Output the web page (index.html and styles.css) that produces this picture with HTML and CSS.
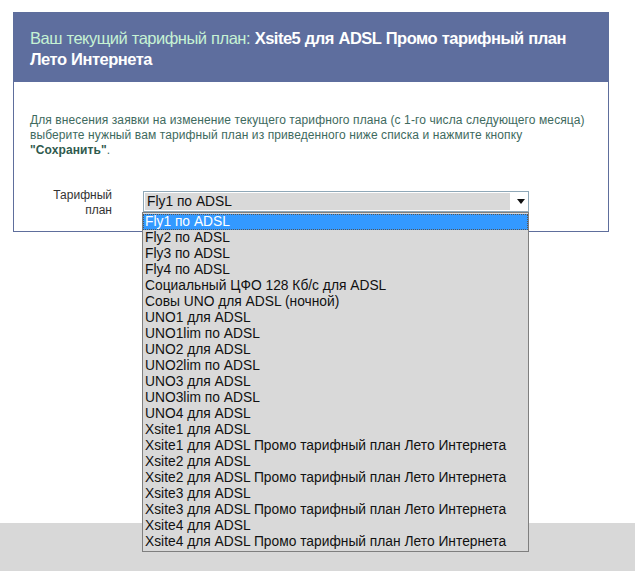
FILE: index.html
```html
<!DOCTYPE html>
<html lang="ru">
<head>
<meta charset="utf-8">
<title>Тарифный план</title>
<link rel="stylesheet" href="styles.css">
</head>
<body>
<div class="main">
  <div class="panel">
    <div class="head"><span class="cur">Ваш текущий тарифный план:</span> <b>Xsite5 для ADSL Промо тарифный план Лето Интернета</b></div>
    <div class="content">
      <p class="info">Для внесения заявки на изменение текущего тарифного плана (с 1-го числа следующего месяца) выберите нужный вам тарифный план из приведенного ниже списка и нажмите кнопку <b>"Сохранить"</b>.</p>
      <div class="row">
        <div class="label">Тарифный<br>план</div>
        <div class="selectwrap">
          <div class="select"><span class="value">Fly1 по ADSL</span><span class="arrow"></span></div>
          <ul class="list">
            <li class="sel">Fly1 по ADSL</li>
            <li>Fly2 по ADSL</li>
            <li>Fly3 по ADSL</li>
            <li>Fly4 по ADSL</li>
            <li>Социальный ЦФО 128 Кб/с для ADSL</li>
            <li>Совы UNO для ADSL (ночной)</li>
            <li>UNO1 для ADSL</li>
            <li>UNO1lim по ADSL</li>
            <li>UNO2 для ADSL</li>
            <li>UNO2lim по ADSL</li>
            <li>UNO3 для ADSL</li>
            <li>UNO3lim по ADSL</li>
            <li>UNO4 для ADSL</li>
            <li>Xsite1 для ADSL</li>
            <li>Xsite1 для ADSL Промо тарифный план Лето Интернета</li>
            <li>Xsite2 для ADSL</li>
            <li>Xsite2 для ADSL Промо тарифный план Лето Интернета</li>
            <li>Xsite3 для ADSL</li>
            <li>Xsite3 для ADSL Промо тарифный план Лето Интернета</li>
            <li>Xsite4 для ADSL</li>
            <li>Xsite4 для ADSL Промо тарифный план Лето Интернета</li>
          </ul>
        </div>
      </div>
    </div>
  </div>
</div>
<div class="footer"></div>
</body>
</html>
```
FILE: styles.css
```css
html, body {
  margin: 0;
  padding: 0;
  background: #ffffff;
  font-family: "Liberation Sans", Arial, sans-serif;
}
.main {
  height: 523px;
  padding: 12px 0 0 13px;
  box-sizing: border-box;
}
.panel {
  width: 596px;
  box-sizing: border-box;
  border: 1px solid #5e6e9c;
  background: #fff;
}
.head {
  background: #5e6e9e;
  color: #ffffff;
  font-size: 16.5px;
  letter-spacing: -0.5px;
  word-spacing: 0.5px;
  line-height: 21px;
  padding: 15px 30px 12px 16px;
}
.head .cur {
  color: #c6f2d4;
}
.head b {
  font-weight: bold;
}
.content {
  padding: 31px 16px 13px 16px;
}
.info {
  margin: 0;
  font-size: 12px;
  letter-spacing: 0.1px;
  line-height: 15px;
  color: #3e6a5e;
}
.info b {
  color: #2f5a4e;
}
.row {
  display: flex;
  margin-top: 33px;
}
.label {
  width: 82px;
  text-align: right;
  font-size: 12px;
  line-height: 15px;
  color: #333;
  margin-top: -3px;
}
.selectwrap {
  position: relative;
  margin-left: 31px;
}
.select {
  width: 386px;
  height: 21px;
  box-sizing: border-box;
  border: 1px solid #8fa8b8;
  background: #fff;
  display: flex;
  align-items: center;
  padding: 1px;
}
.select .value {
  background: #d9d9d9;
  flex: 0 0 365px;
  height: 17px;
  line-height: 17px;
  font-size: 13.8px;
  color: #111;
  padding-left: 2px;
  box-sizing: border-box;
}
.select .arrow {
  margin-left: 7px;
  width: 0;
  height: 0;
  border-left: 4px solid transparent;
  border-right: 4px solid transparent;
  border-top: 5px solid #111;
}
.list {
  position: absolute;
  left: -1px;
  top: 21px;
  width: 387px;
  margin: 0;
  padding: 1px 0;
  list-style: none;
  background: #d9d9d9;
  border: 1px solid #7f7f7f;
  box-sizing: border-box;
}
.list li {
  height: 16px;
  line-height: 16px;
  font-size: 13.8px;
  color: #111;
  padding-left: 2px;
  white-space: nowrap;
}
.list li.sel {
  background: #3399ff;
  color: #fff;
  outline: 1px dotted #555;
  outline-offset: -1px;
}
.footer {
  height: 48px;
  background: #d8d8d8;
}
```
